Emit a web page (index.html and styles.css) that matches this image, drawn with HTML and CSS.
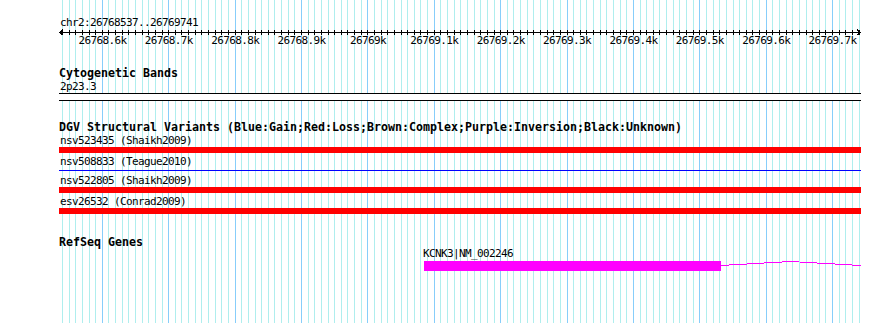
FILE: index.html
```html
<!DOCTYPE html>
<html lang="en">
<head>
  <meta charset="UTF-8">
  <title>chr2:26768537..26769741</title>
  <link rel="stylesheet" href="styles.css">
</head>
<body>
  <div class="panel">
    <!-- Ruler -->
    <div class="track ruler">
      <div class="label">chr2:26768537..26769741</div>
      <svg class="axis" width="802" height="6" viewBox="0 0 802 6">
        <path d="M1 3.5H801 M4 0.5L1 3.5L4 6.5 M798 0.5L801 3.5L798 6.5" stroke="#000" fill="none" shape-rendering="crispEdges"/>
      </svg>
      <div class="scale">
        <span>26768.6k</span>
        <span>26768.7k</span>
        <span>26768.8k</span>
        <span>26768.9k</span>
        <span>26769k</span>
        <span>26769.1k</span>
        <span>26769.2k</span>
        <span>26769.3k</span>
        <span>26769.4k</span>
        <span>26769.5k</span>
        <span>26769.6k</span>
        <span>26769.7k</span>
      </div>
    </div>

    <!-- Cytogenetic Bands -->
    <div class="track cyto">
      <div class="track-title">Cytogenetic Bands</div>
      <div class="label">2p23.3</div>
      <div class="band"></div>
    </div>

    <!-- DGV -->
    <div class="track dgv">
      <div class="track-title">DGV Structural Variants (Blue:Gain;Red:Loss;Brown:Complex;Purple:Inversion;Black:Unknown)</div>
      <div class="feature">
        <div class="label">nsv523435 (Shaikh2009)</div>
        <div class="bar loss"></div>
      </div>
      <div class="feature">
        <div class="label">nsv508833 (Teague2010)</div>
        <div class="bar gain"></div>
      </div>
      <div class="feature">
        <div class="label">nsv522805 (Shaikh2009)</div>
        <div class="bar loss"></div>
      </div>
      <div class="feature">
        <div class="label">esv26532 (Conrad2009)</div>
        <div class="bar loss"></div>
      </div>
    </div>

    <!-- RefSeq -->
    <div class="track refseq">
      <div class="track-title">RefSeq Genes</div>
      <div class="gene" style="margin-left: 365px">
        <div class="label gene-name">KCNK3|NM_002246</div>
        <div class="transcript">
          <div class="exon" style="width: 297px"></div>
          <svg class="intron" width="140" height="10" viewBox="0 0 140 10">
            <polyline points="0,4.5 69.5,0.5 140,4.5" stroke="#f0f" fill="none" shape-rendering="crispEdges"/>
          </svg>
        </div>
      </div>
    </div>
  </div>
</body>
</html>
```

FILE: styles.css
```css
body {
  margin: 0;
  background: #fff;
  color: #000;
  font-family: "DejaVu Sans Mono", "Liberation Mono", monospace;
}

.panel {
  margin-left: 59px;
  width: 802px;
  height: 323px;
  overflow: hidden;
  background-image:
    repeating-linear-gradient(to right, #87cefa 42.826px 43.826px, transparent 43.826px 109.216px),
    repeating-linear-gradient(to right, #afeeee 2.99px 3.99px, transparent 3.99px 9.629px);
}

.label {
  font-size: 11px;
  letter-spacing: -0.62px;
  line-height: 13px;
  padding-left: 1px;
  white-space: nowrap;
}

.track-title {
  font-size: 11.63px;
  font-weight: bold;
  line-height: 12px;
  margin-bottom: 1px;
  white-space: nowrap;
}

/* ruler */
.ruler {
  padding-top: 16px;
}

.axis {
  display: block;
  background:
    repeating-linear-gradient(to right, #000 42.826px 43.826px, transparent 43.826px 109.216px) 0 1px / 100% 5px no-repeat,
    repeating-linear-gradient(to right, #000 2.99px 3.99px, transparent 3.99px 9.629px) 0 1px / 100% 5px no-repeat;
}

.scale {
  display: flex;
  padding-left: 10.3px;
  font-size: 11px;
  letter-spacing: -0.62px;
  line-height: 11px;
  height: 11px;
}

.scale span {
  flex: 0 0 66.39px;
  text-align: center;
  white-space: nowrap;
}

/* tracks */
.cyto {
  margin-top: 21px;
}

.band {
  height: 6px;
  background: #fff;
  border-top: 1px solid #000;
  border-bottom: 1px solid #000;
}

.dgv {
  margin-top: 20px;
}

.feature + .feature {
  margin-top: 2px;
}

.bar {
  height: 6px;
}

.bar.loss {
  background: #f00;
}

.bar.gain {
  height: 1px;
  margin: 2px 0 3px;
  background: #00f;
}

.refseq {
  margin-top: 22px;
}

.gene-name {
  line-height: 14px;
  margin: -2px 0 0 -1px;
  padding-left: 0;
}

.transcript {
  display: flex;
  height: 10px;
}

.exon {
  height: 10px;
  background: #f0f;
}

.intron {
  display: block;
}
```
